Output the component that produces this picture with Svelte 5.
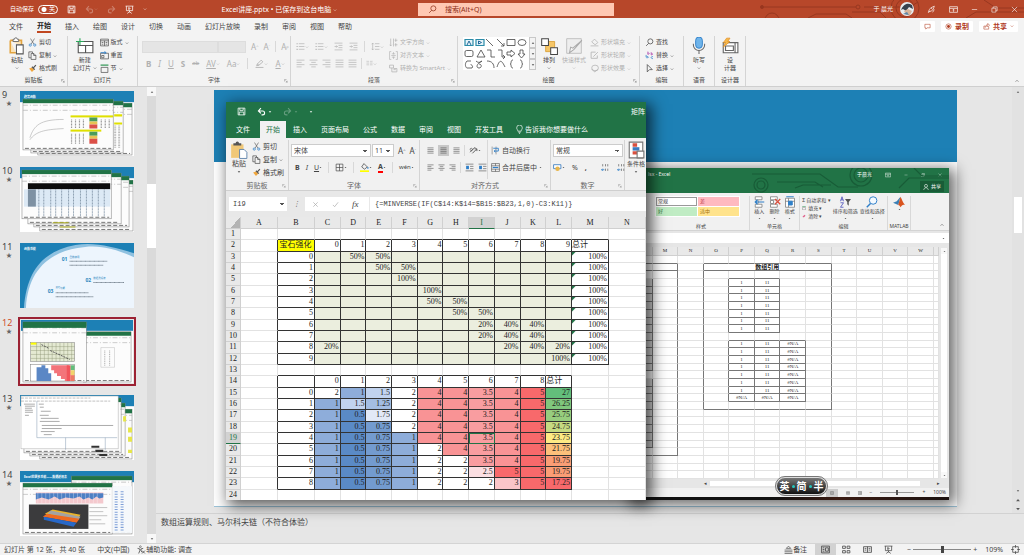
<script>
	const tabs = ['文件', '开始', '插入', '绘图', '设计', '切换', '动画', '幻灯片放映', '录制', '审阅', '视图', '帮助'];
	const xlTabs = ['文件', '开始', '插入', '页面布局', '公式', '数据', '审阅', '视图', '开发工具'];

	const line = 'fill="none" stroke="currentColor"';
	const icons = {
		save: `<path d="M2 2h12v12H2zM5 2v4h6V2M4 14v-5h8v5" ${line} stroke-width="1.4"/>`,
		undo: `<path d="M3 7h7a3 3 0 0 1 0 7H8M7 2L2.500 7 7 11.500" ${line} stroke-width="2"/>`,
		redo: `<path d="M13 7H6a3 3 0 0 0 0 7h2M9 2l4.500 5L9 11.500" ${line} stroke-width="2"/>`,
		present: `<path d="M1 2h14M2.500 2v8h11V2M8 10v3M4 15l4-3 4 3M6.500 4.500v3.500l3-1.700z" ${line} stroke-width="1.300"/>`,
		search: `<circle cx="9.500" cy="6" r="4.500" ${line} stroke-width="1.300"/><path d="M6.500 9.500L2 14" ${line} stroke-width="1.300"/>`,
		pen: `<path d="M3 12c0-3 2-5 4-7l6-3-2 6c-2 2-5 4-8 4zM7 5l3 3M2 14l3-4M13 8l-3 5" ${line} stroke-width="1.200"/>`,
		ribbonBox: `<path d="M1 3h14v10H1zM1 6h14M8 12V8M6 9.500L8 7.500l2 2" ${line} stroke-width="1.200"/>`,
		min: `<path d="M2 8h12" ${line} stroke-width="1.300"/>`,
		restore: `<path d="M2 5h9v9H2zM5 5V2h9v9h-3" ${line} stroke-width="1.300"/>`,
		close: `<path d="M2 2l12 12M14 2L2 14" ${line} stroke-width="1.300"/>`,
		comment: `<path d="M2 3h12v8H7l-3 3v-3H2z" ${line} stroke-width="1.200"/>`,
		record: `<circle cx="8" cy="8" r="6" ${line} stroke-width="1.300"/><circle cx="8" cy="8" r="3.300" fill="currentColor"/>`,
		share: `<path d="M5 7H2v7h11V9M5 10c0-4 3-6 6-6V1l4 4-4 4V6.500C8 6.500 6.500 8 5 10z" ${line} stroke-width="1.200"/>`,
		down: `<path d="M3 6l5 5 5-5" ${line} stroke-width="1.800"/>`,
		up: `<path d="M2 11l6-6 6 6" ${line} stroke-width="2"/>`,
		tri: `<path d="M3 5h10l-5 6z" fill="currentColor"/>`,
		triUp: `<path d="M3 11h10L8 5z" fill="currentColor"/>`,
		launch: `<path d="M2 10V2h8M6 6l7 7M13 7v6H7" ${line} stroke-width="1.300"/>`,
		paste: `<path d="M2 3h10v5M2 3v11h5" fill="#fbe3b8" stroke="#e3a440" stroke-width="1.400"/><path d="M4.500 4V2h1.200a1.300 1.300 0 0 1 2.600 0h1.200v2z" fill="#fff" stroke="#666" stroke-width=".8"/><path d="M7.500 7h6v8h-6z" fill="#fff" stroke="#555" stroke-width=".9"/>`,
		xlpaste: `<path d="M1 3h11v12H1z" fill="#f0c878"/><path d="M3 4V2h2a1.500 1.500 0 0 1 3 0h2v2z" fill="#555"/><path d="M8.500 7.500h4l2.500 2.500v5.500H8.500z" fill="#fff" stroke="#5a7fa8" stroke-width=".8"/>`,
		cut: `<path d="M4.500 1l6 10M11.500 1l-6 10" stroke="#555" stroke-width="1.100"/><circle cx="4" cy="12.500" r="2" fill="none" stroke="#2f7fc8" stroke-width="1.300"/><circle cx="12" cy="12.500" r="2" fill="none" stroke="#2f7fc8" stroke-width="1.300"/>`,
		copy: `<path d="M1.500 12V1.500H8V4M1.500 12H5" ${line} stroke-width="1.200"/><path d="M5.500 4.500h5L14 8v7H5.500zM10 4.500V8h4" ${line} stroke-width="1.200"/>`,
		brush: `<path d="M2 8l5 6 4-4-4-4z" fill="#f0a63c"/><path d="M7 5l5 5M9.500 7L14 2" stroke="#555" stroke-width="2.200"/>`,
		newSlide: `<path d="M2 4h13v10H2zM2 7.500h13M8.500 7.500V14" fill="#fff" stroke="#555" stroke-width="1"/><path d="M0 4h7M3.500 1v6" stroke="#2ba85b" stroke-width="1"/>`,
		layout: `<path d="M1 2h14v12H1zM1 5h14M8 5v9M3 8h3M3 11h3M10 8h3M10 11h3" ${line} stroke-width="1.200"/>`,
		reset: `<path d="M1 4h14v10H1zM3 8h4v4H3z" ${line} stroke-width="1.200"/><path d="M1 3h9M8 1l3 2-3 2" fill="none" stroke="#2f7fc8" stroke-width="1.600"/>`,
		sect: `<path d="M2 6h12v9H2z" ${line} stroke-width="1.200"/><path d="M1 2h14" stroke="#4ba36b" stroke-width="2.500"/>`,
		bullets: `<path d="M5 3h10M5 8h10M5 13h10" ${line} stroke-width="1.200"/><path d="M1 3h2M1 8h2M1 13h2" ${line} stroke-width="2"/>`,
		indent: `<path d="M1 2h14M8 6h7M8 10h7M1 14h14M1 8h5M4 6l2 2-2 2" ${line} stroke-width="1.200"/>`,
		spacing: `<path d="M7 3h8M7 8h8M7 13h8M3 2v12M1 4l2-2 2 2M1 12l2 2 2-2" ${line} stroke-width="1.200"/>`,
		left: `<path d="M1 2h14M1 6h9M1 10h14M1 14h9" ${line} stroke-width="1.200"/>`,
		center: `<path d="M1 2h14M4 6h8M1 10h14M4 14h8" ${line} stroke-width="1.200"/>`,
		right: `<path d="M1 2h14M6 6h9M1 10h14M6 14h9" ${line} stroke-width="1.200"/>`,
		justify: `<path d="M1 2h14M1 6h14M1 10h14M1 14h14" ${line} stroke-width="1.200"/>`,
		cols: `<path d="M1 3h6M9 3h6M1 7h6M9 7h6M1 11h6M9 11h6" ${line} stroke-width="1.200"/>`,
		textdir: `<path d="M3 1v13M1 12l2 2 2-2M8 1v14M12 1v6M10 4h5M12 9v6M10 12h5" ${line} stroke-width="1.200"/>`,
		textalign: `<path d="M4 1H1v14h3M12 1h3v14h-3M4 8h8M8 2v4M8 10v4M5 5h6M5 11h6" ${line} stroke-width="1.100"/>`,
		smart: `<path d="M1 2h7v5H1zM5 7v7h9V8H8M8 10h4" ${line} stroke-width="1.300"/>`,
		marker: `<path d="M4 9l7-7 3 3-7 6zM4 9l-1 3 4-1M1 15h14" ${line} stroke-width="1.500"/>`,
		arrange: `<path d="M5 4h8v9H5z" fill="#f6c667" stroke="#d89a2c" stroke-width=".7"/><path d="M1.500 1.500h6v6h-6zM9.500 9.500h6v6h-6z" fill="#fff" stroke="#444" stroke-width=".9"/>`,
		style: `<path d="M1.500 1.500h13v13h-13z" fill="#eee" stroke="#bbb" stroke-width=".8"/><path d="M15 3L8 11l-4 3 1-5 2 1z" fill="#f8f8f8" stroke="#aaa" stroke-width=".9"/>`,
		fill: `<path d="M8 2l6 6-5 4-6-5zM1 14h14" ${line} stroke-width="1.300"/>`,
		outline: `<path d="M10 2H2v11h11V8M6 10l8-8" ${line} stroke-width="1.400"/>`,
		effect: `<ellipse cx="9" cy="7" rx="6" ry="5" ${line} stroke-width="1.300"/><path d="M3 9l5 5 6-4" ${line} stroke-width="1.500"/>`,
		replace: `<path d="M2 7v4h3M4 9l2 2-2 2" fill="none" stroke="#2f7fc8" stroke-width="1.400"/><path d="M5 1v5M5 4c3-2 4 2 0 2M11 2v5M11 5c3-2 4 2 0 2" fill="none" stroke="#b350b0" stroke-width="1.400"/><path d="M14 10c-4-1-4 4 0 3.500" fill="none" stroke="#2f7fc8" stroke-width="1.400"/>`,
		pointer: `<path d="M4 1l9 9H8l-4 4z" ${line} stroke-width="1.300"/>`,
		mic: `<rect x="5" y="0" width="6" height="10" rx="3" fill="#6fb4ea" stroke="#2f7fc8" stroke-width=".8"/><path d="M3 6v1a5 5 0 0 0 10 0V6M8 12v3" fill="none" stroke="#666" stroke-width=".9"/>`,
		designer: `<path d="M2 5h13v9H2zM4 8h7v4H4zM12.500 5v9" fill="#fff" stroke="#666" stroke-width="1"/><path d="M5 1h3L6 4h2L2 9l2-4H2z" fill="#f6b84a" stroke="#e08a1e" stroke-width=".6"/>`,
		access: `<circle cx="6" cy="3" r="1.600" ${line}/><path d="M1 6l4 1v3l-2 5M11 6L7 7v3l2 3M9 10l5 5M14 10l-5 5" ${line} stroke-width="1.400"/>`,
		notes: `<path d="M1 9h14M1 12h14M1 15h14M4 6l4-4 4 4z" ${line} stroke-width="1.200"/>`,
		normal: `<path d="M1 2h14v12H1zM3 5h3M3 8h3M3 11h3M8 5h5v6H8z" ${line} stroke-width="1.400"/>`,
		sorter: `<path d="M1 2h5v4H1zM9 2h5v4H9zM1 10h5v4H1zM9 10h5v4H9z" ${line} stroke-width="1.400"/>`,
		reading: `<path d="M1 3h14v10H1zM8 3v10M3 6h3M3 9h3M10 6h3M10 9h3" ${line} stroke-width="1.400"/>`,
		fit: `<path d="M3 3h10v10H3zM8 0v5M8 11v5M0 8h5M11 8h5" ${line} stroke-width="1.300"/>`,
		borders: `<path d="M2 2h12v12H2zM8 2v12M2 8h12" ${line} stroke-width="1.200"/>`,
		bucket: `<path d="M7 1l6 6-5 4-5-4z" ${line} stroke-width="1.300"/><path d="M14 7v3" stroke="#2f7fc8" stroke-width="2"/><path d="M0 14.500h16" stroke="#ff0" stroke-width="3"/>`,
		orient: `<path d="M2 11L11 2M6 13l7-7M10 5h4v4" ${line} stroke-width="1.500"/><circle cx="4" cy="6" r="2" ${line}/>`,
		wrap: `<path d="M2 1v14M9 1v14" stroke="#666"/><path d="M4 4h9v5H6M8 7L5.500 9 8 11" fill="none" stroke="#2f7fc8" stroke-width="1.600"/>`,
		merge: `<path d="M1 1h14v14H1zM1 5h14M1 11h14M8 1v4M8 11v4" ${line}/><path d="M3 8h10" stroke="#2f7fc8" stroke-width="2"/>`,
		xlindent: `<path d="M1 2h14M9 6h6M9 10h6M1 14h14" ${line}/><path d="M2 5h5v6H2z" fill="#2f7fc8"/>`,
		money: `<path d="M1 3h13v7H1z" fill="#fff" stroke="#3a7cc0" stroke-width="1.500"/><circle cx="8" cy="10" r="4" fill="#e8b64c"/>`,
		dec: `<path d="M3 2v4M8 2v4M12 2v4M8 10v4M12 10v4" stroke="#777" stroke-width="1.500"/><path d="M1 12h5M3 10l-2 2 2 2" fill="none" stroke="#2f7fc8" stroke-width="1.500"/>`,
		cond: `<path d="M2 1h12v14H2z" fill="#fff" stroke="#777"/><path d="M5 2h4v3H5zM5 9h7v3H5z" fill="#d9503f"/><path d="M5 5.500h6v3H5z" fill="#3a7cc0"/><path d="M9 9h6v6H9z" fill="#fff" stroke="#777"/>`,
		bulb: `<path d="M5 11c0-3-2-3-2-6a5 5 0 0 1 10 0c0 3-2 3-2 6zM6 13h4M7 15h2" ${line} stroke-width="1.200"/>`,
		xcross: `<path d="M3 3l10 10M13 3L3 13" ${line} stroke-width="1.600"/>`,
		check: `<path d="M2 9l4 4 8-10" ${line} stroke-width="1.600"/>`,
		ins: `<path d="M3 1h9v4H3zM3 11h9v4H3zM7 6v4" fill="#fff" stroke="#777"/><path d="M15 8H3M6 5L3 8l3 3" fill="none" stroke="#2f7fc8" stroke-width="1.600"/>`,
		del: `<path d="M2 1h9v4H2zM2 11h9v4H2zM2 6h4v4H2z" fill="#fff" stroke="#777"/><path d="M8 4l7 7M15 4l-7 7" stroke="#d9503f" stroke-width="1.700"/>`,
		fmt: `<path d="M2 3h12v12H2zM2 7h12M6 3v12" fill="#fff" stroke="#777"/><path d="M6 7h5v5H6zM3 1h10" fill="#2f7fc8" stroke="#2f7fc8" stroke-width="1.300"/>`,
		sort: `<path d="M2 7l2-6 2 6M2.600 5h3M2 9h4l-4 6h4" fill="none" stroke="#5b5fc0" stroke-width="1.200"/><path d="M8 4h8l-3 4v5l-2-2V8z" fill="#555"/>`,
		find: `<circle cx="9.500" cy="6" r="5" fill="#f4faff" stroke="#2f7fc8" stroke-width="1.300"/><path d="M6 10l-5 5" stroke="#2f7fc8" stroke-width="2"/>`,
		matlab: `<path d="M0 9l5-2 5-6-3 11z" fill="#3b7fb5"/><path d="M10 1c2 3 3 8 6 11-3-1-4 0-6 3-1-2-2-3-3-3z" fill="#d9541e"/>`,
		eraser: `<path d="M2 11l8-8 4 4-6 6H4z" fill="#e0608a"/>`,
		person: `<circle cx="8" cy="5" r="4" ${line} stroke-width="1.500"/><path d="M2 16c0-8 12-8 12 0" ${line} stroke-width="1.500"/>`
	};

	// front sheet
	const letters = 'ABCDEFGHIJKLMN'.split('');
	const chance = [
		['', 50, 50],
		['', '', 50, 50],
		['', '', '', 100],
		['', '', '', '', 100],
		['', '', '', '', 50, 50],
		['', '', '', '', '', 50, 50],
		['', '', '', '', '', '', 20, 40, 40],
		['', '', '', '', '', '', 20, 40, 40],
		[20, '', '', '', '', '', '', 20, 40, 20],
		['', '', '', '', '', '', '', '', '', 100]
	];
	const inverse = [
		[2, 1, 1.5, 2, 4, 4, 3.5, 4, 5, 27],
		[1, 1.5, 1.25, 2, 4, 4, 3.5, 4, 5, 26.25],
		[1, 0.5, 1.75, 2, 4, 4, 3.5, 4, 5, 25.75],
		[1, 0.5, 0.75, 2, 4, 4, 3.5, 4, 5, 24.75],
		[1, 0.5, 0.75, 1, 4, 4, 3.5, 4, 5, 23.75],
		[1, 0.5, 0.75, 1, 2, 4, 3.5, 4, 5, 21.75],
		[1, 0.5, 0.75, 1, 2, 2, 3.5, 4, 5, 19.75],
		[1, 0.5, 0.75, 1, 2, 2, 2.5, 5, 5, 19.75],
		[1, 0.5, 0.75, 1, 2, 2, 2, 3, 5, 17.25]
	];
	const heat = {
		0.5: '#5a8ac6', 0.75: '#739bcf', 1: '#8eadda', 1.25: '#a4bee3', 1.5: '#c1d3ef', 1.75: '#e2e9f6',
		2: '#ffffff', 2.5: '#fbdfe2', 3: '#fac5c8', 3.5: '#f99da0', 4: '#f99395', 5: '#f8696b',
		27: '#63be7b', 26.25: '#80c77d', 25.75: '#97cd7e', 24.75: '#c6da81', 23.75: '#fdea84', 21.75: '#fcc07b',
		19.75: '#fa9d75', 17.25: '#f8696b'
	};

	function cell(r, c) {
		if (r >= 2 && r <= 12 && c >= 1 && c <= 12) {
			if (r === 2) {
				if (c === 1) return { t: '宝石强化', k: 'box gem' };
				if (c === 12) return { t: '总计', k: 'box txt' };
				return { t: c - 2, k: 'box' };
			}
			if (c === 1) return { t: r - 3, k: 'box' };
			if (c === 12) return { t: '100%', k: 'box flag' };
			const v = chance[r - 3][c - 2];
			return { t: v ? v + '%' : '', k: 'box olive' };
		}
		if (r >= 14 && r <= 23 && c >= 1 && c <= 11) {
			if (r === 14) return c === 11 ? { t: '总计', k: 'box txt' } : { t: c === 1 ? '' : c - 2, k: 'box' };
			if (c === 1) return { t: r - 15, k: 'box' };
			const v = inverse[r - 15][c - 2];
			return { t: v, k: r === 19 && c === 8 ? 'box picked' : 'box', bg: heat[v] };
		}
		const above = (r === 1 && c >= 1 && c <= 12) || (r === 13 && c >= 1 && c <= 11);
		const before = c === 0 && ((r >= 2 && r <= 12) || (r >= 14 && r <= 23));
		return { t: '', k: above ? 'inkb' : before ? 'inkr' : '' };
	}

	// sheet behind, columns L to W
	const backLetters = 'LMNOPQRSTUVW'.split('');
	function backCell(r, c) {
		const k = [];
		let t = '';
		const upper = r >= 4 && r <= 10;
		const lower = r >= 12 && r <= 19;
		if (upper && (c === 4 || c === 5)) t = c === 4 ? '1' : '11';
		if (lower && c >= 4 && c <= 6) t = r === 19 || c === 6 ? '#N/A' : c === 4 ? '1' : '11';
		if (t) k.push('inkb', 'inkr');
		if ((r === 3 || r === 11) && (c === 4 || c === 5 || (c === 6 && r === 11))) k.push('inkb');
		if (c === 3 && (upper || lower)) k.push('inkr');
		if (c === 2 && r >= 2 && r <= 20) k.push('inkr');
		if (c === 7 && r >= 2 && r <= 20) k.push('inkr');
		if (c >= 3 && c <= 7 && (r === 1 || r === 20)) k.push('inkb');
		if (c <= 1 && (r === 1 || r === 2 || r === 26)) k.push('inkb');
		if (c === 1 && r >= 2 && r <= 26) k.push('inkr');
		if (c === 0 && ((r >= 4 && r <= 15) || (r >= 17 && r <= 25))) k.push('inkb', 'inkr', 'shade');
		return { t, k: k.join(' ') };
	}
	const range = (n) => Array.from({ length: n }, (_, i) => i);

	let autosave = false;
	let zoom = 50;
	let formula = '{=MINVERSE(IF(C$14:K$14=$B15:$B23,1,0)-C3:K11)}';
	let notes = '数组运算规则、马尔科夫链（不符合体验）';
	let current = 12;
</script>

{#snippet ic(name, size = 's')}
	<svg class="ic {size}" viewBox="0 0 16 16" aria-hidden="true">{@html icons[name]}</svg>
{/snippet}

{#snippet small(name, text, more = false)}
	<button class="small">
		{@render ic(name)}<span>{text}</span>
		{#if more}{@render ic('down', 'xs')}{/if}
	</button>
{/snippet}

{#snippet foot(text, launcher = true)}
	<footer>
		<span>{text}</span>
		{#if launcher}<button class="launch" aria-label="{text}设置">{@render ic('launch', 'xs')}</button>{/if}
	</footer>
{/snippet}

{#snippet miniWindow(x, y, w, h)}
	<rect {x} {y} width={w} height={h} fill="#fcfcfc" stroke="#777" stroke-width=".5" />
	<rect {x} {y} width={w} height="4" fill="#217346" />
	<path d="M{x} {y + 6}h{w}M{x} {y + 11}h{w}" stroke="#aaa" stroke-width=".6" stroke-dasharray="5 2 1 2" />
	<path d="M{x + 2} {y + h - 1.5}h{w - 4}" stroke="#555" stroke-width=".8" stroke-dasharray="4 2" />
{/snippet}

{#snippet thumb(n)}
	<svg viewBox="0 0 115 64" preserveAspectRatio="none" aria-hidden="true">
		<rect width="115" height="64" fill="#fff" />
		{#if n !== 11}<rect width="115" height="11" fill="#1d80b5" />{/if}
		{#if n === 9}
			<text x="4" y="7" font-size="3" fill="#fff" font-weight="700">趋势函数</text>
			{@render miniWindow(18, 12, 95, 51)}
			{@render miniWindow(11, 10, 93, 51)}
			{@render miniWindow(3, 8, 91, 50)}
			<rect x="51" y="24" width="43" height="2" fill="#dfe000" />
			<rect x="51" y="38" width="31" height="2" fill="#dfe000" />
			<path d="M10 46c4-12 10-18 34-18M10 48c6-8 14-10 34-11" fill="none" stroke="#999" stroke-width=".5" />
			<path d="M52 28v9M56 28v9M60 28v9M64 28v9M82 28v9M86 28v9M90 28v9M52 42v10M56 42v10M60 42v10M64 42v10" stroke="#999" stroke-width="1.200" stroke-dasharray="1 .5" />
			<path d="M70 26h8v4h-8zM70 40h8v4h-8z" fill="#4a9c5c" />
			<path d="M70 30h8v3h-8zM70 44h8v3h-8z" fill="#e8c352" />
			<path d="M70 33h8v4h-8zM70 47h8v5h-8z" fill="#db5048" />
			<path d="M95 24h8M95 32h8" stroke="#dfe000" stroke-width="2" />
			<path d="M96 34v22M100 34v22" stroke="#bbb" stroke-width="2" stroke-dasharray="1 .6" />
		{:else if n === 10}
			{@render miniWindow(20, 13, 94, 50)}
			{@render miniWindow(14, 9, 96, 50)}
			{@render miniWindow(8, 6, 94, 50)}
			{@render miniWindow(2, 3, 90, 48)}
			<rect x="8" y="16" width="83" height="6" fill="#0d0d0d" />
			<rect x="4" y="22" width="87" height="17" fill="#dce9f5" />
			<rect x="8" y="22" width="8" height="17" fill="#7e91a3" />
			<path d="M19 22v27M24 22v27M31 22v27M36 22v27M42 22v27M49 22v27M54 22v27M61 22v27M67 22v27M73 22v27M79 22v27M85 22v27" stroke="#7f92a5" stroke-width=".9" stroke-dasharray="1 .5" />
			<path d="M33 55h16M40 59h16" stroke="#b0b021" />
		{:else if n === 11}
			<rect width="115" height="64" fill="#1d80b5" />
			<path d="M4 64c3-38 20-56 52-62 20-3 37 2 59 8v54z" fill="#8fc1e0" />
			<path d="M6 64c2-36 22-54 52-59 20-4 36 0 57 9v50z" fill="#edf5fd" />
			<text x="4" y="7" font-size="3" fill="#fff" font-weight="700">函数功能</text>
			<g fill="#2b87bd" font-size="5" font-weight="700">
				<text x="42" y="18">01</text><text x="66" y="38">02</text><text x="28" y="49">03</text>
			</g>
			<g fill="#2b87bd" font-size="2.500"><text x="50" y="15">函数使用</text><text x="74" y="35">数据透视表</text><text x="36" y="45">PPT功能</text></g>
			<path d="M50 18h38M50 22h34M74 39h31M36 49h33M36 53h38" stroke="#7c8995" stroke-width="1" stroke-dasharray="1 .3" />
		{:else if n === 12}
			{@render miniWindow(64, 12, 49, 51)}
			<path d="M82 28h14v20H82z" fill="none" stroke="#aaa" stroke-width=".4" />
			<path d="M86 31v16M91 31v16" stroke="#aaa" stroke-dasharray="1 .8" />
			{@render miniWindow(2, 2, 65, 61)}
			<rect x="2" y="2" width="65" height="6" fill="#217346" />
			<rect x="10" y="23" width="45" height="19" fill="#e4e9d2" stroke="#777" stroke-width=".5" />
			<rect x="10" y="23" width="6" height="2" fill="#ff0" />
			<path d="M16 23v19M20 23v19M24 23v19M28 23v19M32 23v19M36 23v19M40 23v19M44 23v19M48 23v19M52 23v19M10 27h45M10 31h45M10 35h45M10 39h45" stroke="#899170" stroke-width=".4" />
			<path d="M21 25l8 4M30 31l20 9" stroke="#555" stroke-dasharray="2 1" />
			<rect x="10" y="45" width="45" height="17" fill="#fff" stroke="#777" stroke-width=".5" />
			<path d="M16 48h5v-2h4v3h3v5h3v8H16z" fill="#5b87c5" />
			<path d="M31 46h18v16h-4v-2h-4v-3h-4v-3h-3v-3h-3z" fill="#f3747a" />
			<rect x="47" y="46" width="4" height="16" fill="#f1545b" />
			<path d="M51 46h4v5h-4z" fill="#63be7b" /><path d="M51 51h4v5h-4z" fill="#f2d36b" /><path d="M51 56h4v6h-4z" fill="#ef7862" />
		{:else if n === 13}
			{@render miniWindow(20, 14, 93, 49)}
			{@render miniWindow(10, 8, 96, 52)}
			{@render miniWindow(4, 3, 98, 54)}
			<rect x="1" y="1" width="98" height="52" fill="#fff" stroke="#aaa" stroke-width=".5" />
			<path d="M1 3h70M1 6h90" stroke="#999" stroke-width=".6" stroke-dasharray="3 1" />
			<path d="M17 6v36h81M46 42v12M86 42v12" stroke="#8298b0" stroke-width=".5" fill="none" />
			<path d="M4 9h11M5 11h10M5 13h7M5 15h8M5 17h8M5 20h4M19 9h5M20 12h4M21 16h10M20 20h9M21 23h18M20 26h20M22 30h72M22 33h20M21 36h14M24 39h8" stroke="#888" stroke-width=".7" />
			<path d="M72 51h8M76 55h8M80 59h8" stroke="#333" stroke-width="2" />
			<path d="M104 21h3v5h-3zM109 32h4v5h-4zM109 41h4v5h-4zM109 54h4v3h-4z" fill="#e6e64a" />
		{:else}
			<text x="4" y="7" font-size="3" fill="#fff" font-weight="700">Excel的更多功能——数据透视表</text>
			{@render miniWindow(52, 5, 61, 57)}
			{@render miniWindow(3, 12, 90, 50)}
			<rect x="93" y="15" width="20" height="46" fill="#f5f8fb" />
			<path d="M97 20v40M103 20v40" stroke="#7f9fd8" stroke-width="3" stroke-dasharray="1 1.500" />
			<rect x="16" y="21" width="68" height="11" fill="#f4c9ce" />
			<path d="M16 22h68v4l-4 1-3-2-4 3-4-2-5 2-4-3-6 2-8-1-6 2-5-3-6 3-7-2-6 2z" fill="#4d7fc4" />
			<path d="M18 21v11M22 21v11M26 21v11M30 21v11M34 21v11M38 21v11M42 21v11M46 21v11M50 21v11M54 21v11M58 21v11M62 21v11M66 21v11M70 21v11M74 21v11M78 21v11" stroke="#fff" stroke-width=".3" />
			<rect x="9" y="33" width="60" height="24" fill="#3b3b3d" />
			<path d="M33 38l28 5-3 5-33-6z" fill="#e9b32d" /><path d="M31 39l30 6-2 3-31-6z" fill="#a3a3a3" />
			<path d="M27 42l33 5-3 4-34-6z" fill="#ee6b22" /><path d="M24 45l33 6-3 4-30-7z" fill="#2868c8" />
			<path d="M70 36h18M70 40h14M70 44h18M70 48h12M70 52h16" stroke="#aaa" stroke-width=".7" />
		{/if}
	</svg>
{/snippet}

<div class="app">
	<header class="titlebar">
		<svg class="circuit" viewBox="0 0 264 18" aria-hidden="true">
			<g fill="none" stroke="#983820" stroke-width="1">
				<path d="M4 7h92M104 7h36M48 18l8-4h30l6 4M92 12h28l6 6M150 7l8-5M206 18l10-6h48M224 0l12 8h28" />
				<circle cx="2" cy="7" r="1.500" fill="#983820" /><circle cx="98" cy="7" r="2" /><circle cx="12" cy="20" r="7" />
				<circle cx="145" cy="8" r="14" /><circle cx="145" cy="8" r="9" />
			</g>
		</svg>
		<div class="quick">
			<label class="auto"><span>自动保存</span><input type="checkbox" bind:checked={autosave} /><i>关</i></label>
			<button aria-label="保存">{@render ic('save')}</button>
			<button class="dim" aria-label="撤消">{@render ic('undo', 's')}{@render ic('down', 'xs')}</button>
			<button class="dim" aria-label="重做">{@render ic('redo')}</button>
			<button aria-label="从头开始">{@render ic('present')}</button>
			<button aria-label="自定义">{@render ic('down', 'xs')}</button>
			<span class="doc">Excel讲座.pptx • 已保存到这台电脑 {@render ic('down', 'xs')}</span>
		</div>
		<label class="find">{@render ic('search')}<input type="text" aria-label="搜索" placeholder="搜索(Alt+Q)" /></label>
		<div class="winbtns">
			<span>于 晨光</span>
			<svg class="avatar" viewBox="0 0 14 14" aria-hidden="true">
				<circle cx="7" cy="7" r="7" fill="#e9edf0" /><path d="M1 8c2-5 6-8 11-5l1 4-4-2-3 4-3-2z" fill="#38424e" /><path d="M4 9l4-2 4 2-2 4H6z" fill="#d8b59b" /><path d="M3 12l4-2 2 3z" fill="#5e87a8" />
			</svg>
			<button aria-label="墨迹">{@render ic('pen')}</button>
			<button aria-label="功能区显示选项">{@render ic('ribbonBox', 's')}</button>
			<button aria-label="最小化">{@render ic('min', 'm7')}</button>
			<button aria-label="还原">{@render ic('restore', 'm7')}</button>
			<button aria-label="关闭">{@render ic('close', 'm7')}</button>
		</div>
	</header>

	<nav class="tabs">
		{#each tabs as tab}
			<button class:on={tab === '开始'}>{tab}</button>
		{/each}
		<span class="grow"></span>
		<button class="pill" aria-label="批注">{@render ic('comment', 'm7')}</button>
		<button class="pill">{@render ic('record', 'm7')}录制</button>
		<button class="pill">{@render ic('share', 'm7')}共享 {@render ic('down', 'xs')}</button>
	</nav>

	<div class="ribbon">
		<section class="g-clip">
			<div class="body">
				<button class="big">{@render ic('paste', 'xl')}<span>粘贴</span>{@render ic('down', 'xs')}</button>
				<div class="stack">{@render small('cut', '剪切')}{@render small('copy', '复制', true)}{@render small('brush', '格式刷')}</div>
			</div>
			{@render foot('剪贴板')}
		</section>
		<section class="g-slides">
			<div class="body">
				<button class="big">{@render ic('newSlide', 'xl')}<span>新建</span><span>幻灯片 {@render ic('down', 'xs')}</span></button>
				<div class="stack">{@render small('layout', '版式', true)}{@render small('reset', '重置')}{@render small('sect', '节', true)}</div>
			</div>
			{@render foot('幻灯片', false)}
		</section>
		<section class="g-font off">
			<div class="body col">
				<div class="line">
					<select class="face" aria-label="字体" disabled><option></option></select>
					<select class="pt" aria-label="字号" disabled><option></option></select>
					<button>A<sup>^</sup></button><button>A<sup>ˇ</sup></button><i class="vr"></i><button>A<sub>ρ</sub></button>
				</div>
				<div class="line fmt">
					<button><b>B</b></button><button><em>I</em></button><button><u>U</u></button><button><b>S</b></button>
					<button class="tiny"><s>ab</s></button><button><u>AV</u>{@render ic('down', 'xs')}</button><button>Aa{@render ic('down', 'xs')}</button>
					<i class="vr"></i>
					<button aria-label="荧光笔">{@render ic('marker')}{@render ic('down', 'xs')}</button><button><u>A</u>{@render ic('down', 'xs')}</button>
				</div>
			</div>
			{@render foot('字体')}
		</section>
		<section class="g-para off">
			<div class="body">
				<div class="col">
					<div class="line">
						{#each ['bullets', 'bullets', 'indent', 'indent', 'spacing'] as name, i}
							{#if i === 4}<i class="vr"></i>{/if}
							<button aria-label="段落 {i}">{@render ic(name)}{#if i < 2 || i > 3}{@render ic('down', 'xs')}{/if}</button>
						{/each}
					</div>
					<div class="line wide">
						{#each ['left', 'center', 'right', 'justify', 'justify'] as name}
							<button aria-label={name}>{@render ic(name)}</button>
						{/each}
						<i class="vr"></i><button aria-label="分栏">{@render ic('cols', 'm7')}{@render ic('down', 'xs')}</button>
					</div>
				</div>
				<div class="stack">{@render small('textdir', '文字方向', true)}{@render small('textalign', '对齐文本', true)}{@render small('smart', '转换为 SmartArt', true)}</div>
			</div>
			{@render foot('段落')}
		</section>
		<section class="g-draw">
			<div class="body">
				<div class="gallery">
					<svg class="shapes" viewBox="0 0 66 33" aria-hidden="true">
						<g fill="none" stroke="#444" stroke-width=".8">
							<path d="M23 2l7 7M34 2l7 7M41 6v3h-3M44 2.500h8v6h-8zM14 20l4-7 4 7zM24 13h4v7h4M35 13h4v7h3M40 18l2 2-2 2M44 15h4v-2l4 3.500-4 3.500v-2h-4zM57 13h3v4h2l-3.500 4-3.500-4h2z" />
							<rect x="2" y="13.500" width="8" height="6" rx="1.500" /><ellipse cx="59" cy="5.500" rx="4" ry="3" />
							<path d="M8 24H4c-3 3-1 7 0 7h5c2-3-2-3-1-4M13 24c3 3 6 0 6 0-6 3-6 7-3 7s3-4 0-4M24 24c5 0 7 3 7 7M34 30c3-9 5-6 8 0M50 23c-3 0-1 4-3 4 2 0 0 4 3 4M57 23c3 0 1 4 3 4-2 0 0 4-3 4" />
						</g>
						<path d="M2 2.500h8v6H2zM13 2.500h8v6h-8z" fill="#e6f3f8" stroke="#2a8ba8" stroke-width="1.200" />
						<path d="M4 8l2-4 2 4M15.500 4l3 1.500-3 1.500z" fill="none" stroke="#256a9c" />
					</svg>
					<div class="steps">
						<button aria-label="上一行">{@render ic('triUp', 'xs')}</button><button aria-label="下一行">{@render ic('tri', 'xs')}</button><button aria-label="更多形状">{@render ic('tri', 'xs')}</button>
					</div>
				</div>
				<button class="big">{@render ic('arrange', 'xl')}<span>排列</span>{@render ic('down', 'xs')}</button>
				<button class="big off">{@render ic('style', 'xl')}<span>快速样式</span>{@render ic('down', 'xs')}</button>
				<div class="stack off">{@render small('fill', '形状填充', true)}{@render small('outline', '形状轮廓', true)}{@render small('effect', '形状效果', true)}</div>
			</div>
			{@render foot('绘图')}
		</section>
		<section class="g-edit">
			<div class="body"><div class="stack">{@render small('search', '查找')}{@render small('replace', '替换', true)}{@render small('pointer', '选择', true)}</div></div>
			{@render foot('编辑', false)}
		</section>
		<section class="g-one">
			<div class="body"><button class="big">{@render ic('mic', 'xl')}<span>听写</span>{@render ic('down', 'xs')}</button></div>
			{@render foot('语音', false)}
		</section>
		<section class="g-one">
			<div class="body"><button class="big">{@render ic('designer', 'xl')}<span>设</span><span>计器</span></button></div>
			{@render foot('设计器', false)}
		</section>
		<button class="fold" aria-label="折叠功能区">{@render ic('up', 'xs')}</button>
	</div>

	<main>
		<aside>
			<ol>
				{#each [9, 10, 11, 12, 13, 14] as n}
					<li class:current={n === current}>
						<div class="num"><span>{n}</span><small>★</small></div>
						<button class="thumb" aria-label="幻灯片 {n}" on:click={() => (current = n)}>{@render thumb(n)}</button>
					</li>
				{/each}
			</ol>
			<div class="bar panes">
				<button aria-label="向上滚动">{@render ic('triUp', 'xs')}</button><i class="knob"></i><button class="end" aria-label="向下滚动">{@render ic('tri', 'xs')}</button>
			</div>
		</aside>

		<div class="stage">
			<div class="canvas">
				<div class="slide">
					<div class="band"></div>

					<div class="win back">
						<div class="xltitle">
							<svg class="circuit" viewBox="0 0 200 25" preserveAspectRatio="xMaxYMin meet" aria-hidden="true">
								<g fill="none" stroke="#185c37" stroke-width="1.200">
									<path d="M3 6h68l18 13h20M28 14h38l8 5M46 20l8-3h28M150 20l10-10h40M165 0l8 8h27" /><circle cx="12" cy="17" r="7" /><circle cx="12" cy="17" r="4" /><circle cx="112" cy="7" r="11" /><circle cx="112" cy="7" r="7" />
								</g>
							</svg>
							<span class="name">lsx - Excel</span>
							<span class="user">于晨光</span>
							{@render ic('ribbonBox', 'xm')}{@render ic('min', 'xs')}{@render ic('restore', 'xs')}{@render ic('close', 'xs')}
						</div>
						<div class="sharerow"><button>{@render ic('person', 'xm')} 共享</button></div>
						<div class="ribbon2">
							<section class="b-style">
								<div class="swatches"><span class="plain">常规</span><span class="bad">差</span><span class="good">好</span><span class="mid">适中</span></div>
								<footer>样式</footer>
							</section>
							<section class="b-cells">
								<div class="trio">
									{#each [['ins', '插入'], ['del', '删除'], ['fmt', '格式']] as [name, text]}
										<button class="big">{@render ic(name, 'm12')}<span>{text}</span>{@render ic('tri', 'xxs')}</button>
									{/each}
								</div>
								<footer>单元格</footer>
							</section>
							<section class="b-edit">
								<div class="trio">
									<div class="mini"><button>Σ 自动求和 ▾</button><button>{@render ic('sect', 'xs')} 填充 ▾</button><button>{@render ic('eraser', 'xs')} 清除 ▾</button></div>
									<button class="big">{@render ic('sort', 'm12')}<span>排序和筛选</span>{@render ic('tri', 'xxs')}</button>
									<button class="big">{@render ic('find', 'm12')}<span>查找和选择</span>{@render ic('tri', 'xxs')}</button>
								</div>
								<footer>编辑</footer>
							</section>
							<section class="b-matlab">
								<div class="trio"><button class="big" aria-label="MATLAB">{@render ic('matlab', 'm12')}{@render ic('tri', 'xxs')}</button></div>
								<footer>MATLAB</footer>
							</section>
							<button class="fold" aria-label="折叠">{@render ic('up', 'xs')}</button>
						</div>
						<div class="fxempty"><span>{@render ic('tri', 'xxs')}</span></div>
						<div class="sheetwrap">
							<table class="sheet">
								<colgroup>{#each backLetters as l}<col />{/each}<col class="sliver" /></colgroup>
								<thead><tr>{#each backLetters as l}<th>{l}</th>{/each}<th></th></tr></thead>
								<tbody>
									{#each range(29) as i}
										<tr>
											{#if i === 1}
												<td class="inkb"></td><td class="inkb inkr"></td><td class="inkr"></td>
												<td colspan="5" class="inkb inkr head">数组引用</td>
												<td></td><td></td><td></td><td></td><td></td>
											{:else}
												{#each backLetters as l, c}
													{@const d = backCell(i + 1, c)}
													<td class={d.k}>{d.t}</td>
												{/each}
												<td></td>
											{/if}
										</tr>
									{/each}
								</tbody>
							</table>
							<div class="bar inner"><button aria-label="上">{@render ic('triUp', 'xxs')}</button><i class="knob"></i><button aria-label="下">{@render ic('tri', 'xxs')}</button></div>
						</div>
						<div class="hscroll"><span>◂</span><i></i><span>▸</span></div>
						<div class="xlstatus">
							<span class="sel">{@render ic('borders', 'xs')}</span><span>{@render ic('reading', 'xs')}</span><span>{@render ic('normal', 'xs')}</span>
							<span>−</span><i></i><span>+</span><span>100%</span>
						</div>
						<div class="strip"></div>
						<div class="ime"><b>英</b><i></i><b>简</b><i></i><b>半</b></div>
					</div>

					<div class="win front">
						<div class="xltitle">
							{@render ic('save')}<span class="undo">{@render ic('undo')}{@render ic('tri', 'xs')}</span><span class="dimmed">{@render ic('redo')}{@render ic('tri', 'xs')}</span>{@render ic('tri', 'xs')}
							<span class="name">矩阵</span>
						</div>
						<nav class="xltabs">
							{#each xlTabs as tab}
								<button class:on={tab === '开始'}>{tab}</button>
							{/each}
							<button class="tell">{@render ic('bulb')} 告诉我你想要做什么</button>
						</nav>
						<div class="ribbon xl">
							<section class="x-clip">
								<div class="body">
									<button class="big">{@render ic('xlpaste', 'xl')}<span>粘贴</span>{@render ic('tri', 'xs')}</button>
									<div class="stack">{@render small('cut', '剪切')}{@render small('copy', '复制', true)}{@render small('brush', '格式刷')}</div>
								</div>
								{@render foot('剪贴板')}
							</section>
							<section class="x-font">
								<div class="body col">
									<div class="line">
										<select class="face" aria-label="单元格字体"><option>宋体</option></select>
										<select class="pt" aria-label="单元格字号"><option>11</option></select>
										<button class="grow-a">A<sup>^</sup></button><button class="grow-a">A<sup>ˇ</sup></button>
									</div>
									<div class="line fmt">
										<button><b>B</b></button><button><em>I</em></button><button><u>U</u> {@render ic('tri', 'xxs')}</button><i class="vr"></i>
										<button aria-label="边框">{@render ic('borders')}{@render ic('tri', 'xxs')}</button><i class="vr"></i>
										<button aria-label="填充颜色">{@render ic('bucket')}{@render ic('tri', 'xxs')}</button>
										<button><b class="redline">A</b>{@render ic('tri', 'xxs')}</button><i class="vr"></i><button class="tiny">wén{@render ic('tri', 'xxs')}</button>
									</div>
								</div>
								{@render foot('字体')}
							</section>
							<section class="x-align">
								<div class="body">
									<div class="col">
										<div class="line"><button aria-label="顶端">{@render ic('justify', 'm7')}</button><button class="pressed" aria-label="垂直居中">{@render ic('justify', 'm7')}</button><button aria-label="底端">{@render ic('justify', 'm7')}</button><i class="vr"></i><button aria-label="方向">{@render ic('orient')}{@render ic('tri', 'xxs')}</button></div>
										<div class="line"><button aria-label="左">{@render ic('left', 'm7')}</button><button aria-label="中">{@render ic('center', 'm7')}</button><button aria-label="右">{@render ic('right', 'm7')}</button><i class="vr"></i><button aria-label="减少缩进">{@render ic('xlindent')}</button><button aria-label="增加缩进">{@render ic('xlindent')}</button></div>
									</div>
									<div class="col sep">
										<div class="line"><button class="small">{@render ic('wrap')}<span>自动换行</span></button></div>
										<div class="line"><button class="small">{@render ic('merge')}<span>合并后居中</span>{@render ic('tri', 'xxs')}</button></div>
									</div>
								</div>
								{@render foot('对齐方式')}
							</section>
							<section class="x-num">
								<div class="body col">
									<div class="line"><select class="kind" aria-label="数字格式"><option>常规</option></select></div>
									<div class="line nums"><button aria-label="会计格式">{@render ic('money')}{@render ic('tri', 'xxs')}</button><button>%</button><button><b>,</b></button><i class="vr"></i><button aria-label="增加小数">{@render ic('dec')}</button><button aria-label="减少小数">{@render ic('dec')}</button></div>
								</div>
								{@render foot('数字')}
							</section>
							<section class="x-cond"><div class="body"><button class="big">{@render ic('cond', 'xl')}<span>条件格</span>{@render ic('tri', 'xs')}</button></div></section>
						</div>
						<div class="fx">
							<select aria-label="名称框"><option>I19</option></select>
							<i class="dots">⋮</i>
							<div class="fxb">{@render ic('xcross', 'm7')}{@render ic('check', 'm7')}<em>fx</em></div>
							<input type="text" aria-label="编辑栏" bind:value={formula} />
						</div>
						<table class="sheet">
							<colgroup><col class="rowno" /><col class="wide" /><col class="wide" />{#each range(10) as i}<col />{/each}<col class="wide" /><col class="wide" /></colgroup>
							<thead><tr><th class="corner"></th>{#each letters as l}<th class:hot={l === 'I'}>{l}</th>{/each}</tr></thead>
							<tbody>
								{#each range(24) as i}
									<tr>
										<th class:hot={i === 18}>{i + 1}</th>
										{#each letters as l, c}
											{@const d = cell(i + 1, c)}
											<td class={d.k} style:background={d.bg}>{d.t}</td>
										{/each}
									</tr>
								{/each}
							</tbody>
						</table>
					</div>
				</div>
				<div class="bar right">
					<button aria-label="上">{@render ic('triUp', 'xs')}</button><i class="knob"></i>
					<button class="end" aria-label="下">{@render ic('tri', 'xs')}</button><button aria-label="上一张">{@render ic('triUp', 'xm')}</button><button aria-label="下一张">{@render ic('tri', 'xm')}</button>
				</div>
			</div>
			<textarea class="notes" aria-label="备注" bind:value={notes}></textarea>
		</div>
	</main>

	<footer class="status">
		<span>幻灯片 第 12 张，共 40 张</span>
		<span>中文(中国)</span>
		<button>{@render ic('access')} 辅助功能: 调查</button>
		<span class="grow"></span>
		<button>{@render ic('notes')}备注</button>
		<div class="views">
			<button class="on" aria-label="普通视图">{@render ic('normal')}</button><button aria-label="幻灯片浏览">{@render ic('sorter')}</button>
			<button aria-label="阅读视图">{@render ic('reading')}</button><button aria-label="放映">{@render ic('present')}</button>
		</div>
		<button class="dimmed">−</button>
		<input type="range" aria-label="缩放" bind:value={zoom} />
		<button>+</button>
		<span class="pct">109%</span>
		<button aria-label="适应窗口">{@render ic('fit')}</button>
	</footer>
</div>

<style>
	:global(body) {
		background: #e6e6e6;
	}

	.app {
		display: flex;
		flex-direction: column;
		height: 100vh;
		min-height: 555px;
		overflow: hidden;
		font-family: 'Noto Sans', 'Noto Sans CJK SC', sans-serif;
		font-size: 7px;
		line-height: 9px;
		color: #444;
	}

	.app :global(*) {
		box-sizing: border-box;
	}

	button,
	select,
	input,
	textarea {
		margin: 0;
		padding: 0;
		border: 0;
		background: none;
		font: inherit;
		color: inherit;
		appearance: none;
		border-radius: 0;
		outline: none;
	}

	button {
		display: flex;
		align-items: center;
		justify-content: center;
		white-space: nowrap;
	}

	.ic {
		width: 9px;
		height: 9px;
		flex: none;
	}
	.ic.xxs { width: 3px; height: 3px; }
	.ic.xs { width: 4px; height: 4px; }
	.ic.xm { width: 6px; height: 6px; }
	.ic.m7 { width: 7px; height: 7px; }
	.ic.m12 { width: 12px; height: 12px; }
	.ic.xl { width: 18px; height: 18px; }

	.grow {
		flex: 1;
	}

	/* title bar */
	.titlebar {
		position: relative;
		flex: none;
		display: grid;
		grid-template-columns: 1fr 196px 1fr;
		align-items: center;
		height: 18px;
		padding-left: 8px;
		background: #b7472a;
		color: #fff;
		font-size: 6px;
	}

	.titlebar .circuit {
		position: absolute;
		right: 0;
		top: 0;
		width: 264px;
		height: 18px;
	}

	.quick {
		display: flex;
		align-items: center;
		gap: 9px;
		padding-left: 2px;
	}

	.dim {
		opacity: 0.3;
	}

	.auto {
		display: flex;
		align-items: center;
		gap: 4px;
		position: relative;
	}

	.auto input {
		width: 20px;
		height: 9px;
		border: 1px solid #fff;
		border-radius: 5px;
		background: radial-gradient(circle at 5px 50%, #fff 2px, transparent 3px);
	}

	.auto i {
		position: absolute;
		right: 3px;
		font-style: normal;
	}

	.doc {
		margin-left: auto;
		margin-right: 81px;
		font-size: 7px;
		white-space: nowrap;
	}

	.find {
		display: flex;
		align-items: center;
		gap: 8px;
		height: 13px;
		padding-left: 10px;
		background: #ffc8b3;
		color: #8c2c14;
		font-size: 7px;
	}

	.find input::placeholder {
		color: #8c2c14;
	}

	.winbtns {
		position: relative;
		display: flex;
		align-items: center;
		justify-content: flex-end;
		gap: 13px;
		padding-right: 6px;
	}

	.winbtns span {
		margin-right: -6px;
	}

	.avatar {
		width: 14px;
		height: 14px;
	}

	/* tabs */
	.tabs {
		flex: none;
		display: flex;
		align-items: center;
		gap: 14px;
		height: 16px;
		padding: 0 6px 0 9px;
		background: #f3f3f3;
	}

	.tabs .on {
		height: 13px;
		border-bottom: 2px solid #c0461f;
		font-weight: 700;
		color: #222;
	}

	.pill {
		height: 11px;
		padding: 0 4px;
		gap: 3px;
		background: #fff;
		border-radius: 1px;
		color: #b03a1c;
		font-weight: 700;
	}

	.tabs .pill + .pill {
		margin-left: -8px;
	}

	/* ribbons */
	.ribbon {
		position: relative;
		flex: none;
		display: flex;
		height: 53px;
		padding-top: 2px;
		border-bottom: 1px solid #cfcfcf;
		background: #f3f3f3;
		font-size: 6px;
		overflow: hidden;
	}

	.ribbon section {
		flex: none;
		display: flex;
		flex-direction: column;
		border-right: 1px solid #d4d4d4;
	}

	.body {
		display: flex;
		height: 39px;
	}

	.body.col,
	.col {
		display: flex;
		flex-direction: column;
		padding-top: 2px;
	}

	.ribbon footer {
		position: relative;
		height: 11px;
		line-height: 11px;
		text-align: center;
	}

	.launch {
		position: absolute;
		right: 2px;
		top: 4px;
	}

	.big {
		flex-direction: column;
		justify-content: flex-start;
		line-height: 8px;
	}

	.big .ic.xl {
		margin: 1px 0;
	}

	.big span + .ic {
		margin-top: 2px;
	}

	.stack {
		display: flex;
		flex-direction: column;
		align-items: flex-start;
	}

	.small {
		height: 13px;
		gap: 2px;
	}

	.line {
		display: flex;
		align-items: center;
		height: 17px;
		gap: 4px;
	}

	.vr {
		width: 1px;
		height: 11px;
		background: #d8d8d8;
	}

	.off {
		color: #b0b0b0;
	}

	.off footer {
		color: #555;
	}

	sup,
	sub {
		font-size: 4px;
		line-height: 4px;
	}

	.g-clip { width: 68px; }
	.g-clip .body { padding-left: 8px; gap: 2px; }
	.g-slides { width: 70px; }
	.g-slides .body { padding-left: 5px; gap: 3px; }
	.g-font { width: 153px; }
	.g-font .body { padding-left: 4px; font-size: 8px; }
	.g-font .line:first-child { gap: 5px; }
	.g-font .face { width: 76px; }
	.g-font .pt { width: 28px; margin-left: -5px; }
	.g-font .fmt { padding-left: 4px; gap: 7px; }
	.g-font select { height: 12px; background: #e0e0e0; border: 1px solid #d4d4d4; }
	.g-para { width: 167px; }
	.g-para .body { padding-left: 5px; gap: 5px; }
	.g-para .line { gap: 6px; }
	.g-para .wide { gap: 4px; }
	.g-draw { width: 182px; }
	.g-draw .body { padding-left: 5px; gap: 4px; }
	.g-edit { width: 44px; }
	.g-edit .body { padding-left: 5px; }
	.g-one { width: 31px; }
	.g-one .body { justify-content: center; }

	.tiny {
		font-size: 6px;
	}

	.gallery {
		display: flex;
		width: 73px;
		height: 33px;
		margin-top: 1px;
		background: #fff;
	}

	.shapes {
		width: 66px;
		height: 33px;
	}

	.steps {
		width: 7px;
	}

	.steps button {
		width: 7px;
		height: 11px;
		border: 1px solid #c8c8c8;
		background: #f3f3f3;
	}

	.fold {
		position: absolute;
		right: 5px;
		bottom: 3px;
	}

	/* slide list */
	main {
		flex: 1;
		display: flex;
		min-height: 0;
	}

	aside {
		flex: none;
		display: flex;
		width: 156px;
	}

	ol {
		flex: 1;
		margin: 0;
		padding: 2px 0 0;
		list-style: none;
		overflow: hidden;
	}

	li {
		display: flex;
		height: 76px;
	}

	.num {
		width: 18px;
		padding-left: 2px;
		font-size: 9px;
		line-height: 11px;
	}

	.num small {
		display: block;
		padding-left: 4px;
		font-size: 6px;
		line-height: 6px;
		color: #666;
	}

	.thumb {
		width: 118px;
		height: 69px;
		padding: 2px;
	}

	.thumb svg {
		width: 100%;
		height: 100%;
	}

	.current .thumb {
		border: 2px solid #9c2233;
		padding: 1px;
	}

	.current .num span {
		color: #d0502c;
	}

	.bar {
		flex: none;
		display: flex;
		flex-direction: column;
		width: 9px;
		background: #dadada;
	}

	.bar button {
		height: 9px;
		background: #f8f8f8;
		color: #555;
	}

	.bar .end {
		margin-top: auto;
	}

	.knob {
		background: #fff;
	}

	.panes .knob {
		height: 64px;
		margin-top: 88px;
	}

	/* stage */
	.stage {
		flex: 1;
		display: flex;
		flex-direction: column;
		min-width: 0;
	}

	.canvas {
		flex: 1;
		display: flex;
		min-height: 0;
		border-bottom: 1px solid #d2d2d2;
	}

	.slide {
		position: relative;
		flex: 1;
		margin: 3px 55px 6px 58px;
		background: #fff;
		border-bottom: 1px solid #9cc3d8;
	}

	.band {
		height: 72px;
		background: #1d80b5;
	}

	.bar.right {
		background: #e2e2e2;
		width: 12px;
		padding: 0 2px;
	}

	.right .knob {
		height: 36px;
		margin-top: 101px;
	}

	.right button {
		background: none;
	}

	.notes {
		flex: none;
		height: 29px;
		padding: 3px 5px;
		font-size: 8px;
		line-height: 10px;
		resize: none;
	}

	.win {
		position: absolute;
		display: flex;
		flex-direction: column;
		bottom: 6px;
		background: #f1f1f1;
	}

	.front {
		left: 12px;
		top: 12px;
		width: 420px;
		box-shadow: 4px 4px 14px 2px rgba(0, 0, 0, 0.65);
		overflow: hidden;
	}

	.back {
		right: 8px;
		top: 78px;
		width: 322px;
		box-shadow: 4px 3px 14px 2px rgba(0, 0, 0, 0.6);
		font-size: 5px;
		line-height: 7px;
	}

	.xltitle {
		position: relative;
		display: flex;
		align-items: center;
		gap: 11px;
		flex: none;
		height: 19px;
		padding-left: 11px;
		background: #217346;
		color: #fff;
	}

	.xltitle .undo,
	.xltitle .dimmed {
		display: flex;
		align-items: center;
		gap: 2px;
	}

	.xltitle .dimmed {
		opacity: 0.3;
	}

	.front .name {
		margin-left: auto;
		margin-right: 1px;
	}

	.xltabs {
		flex: none;
		display: flex;
		align-items: stretch;
		height: 17px;
		padding-left: 3px;
		background: #217346;
		color: #fff;
	}

	.xltabs button {
		padding: 0 7px;
	}

	.xltabs button:first-child {
		margin-right: 3px;
	}

	.xltabs .on {
		padding: 0 6px;
		background: #f1f1f1;
		color: #217346;
	}

	.xltabs .tell {
		gap: 1px;
		padding: 0 5px;
	}

	.ribbon.xl {
		height: 53px;
		background: #f1f1f1;
		font-size: 7px;
	}

	.ribbon.xl footer {
		margin-top: 1px;
		height: 10px;
		color: #666;
	}

	.xl .big {
		width: 22px;
	}

	.x-clip { width: 63px; }
	.x-clip .body { padding-left: 2px; gap: 2px; }
	.x-font { width: 131px; }
	.x-font .body { padding-left: 2px; }
	.x-font .face { width: 80px; }
	.x-font .pt { width: 22px; margin-left: -3px; }
	.x-font .fmt { padding-left: 4px; gap: 6px; }
	.x-align { width: 131px; }
	.x-align .body { padding-left: 7px; }
	.x-num { width: 74px; }
	.x-num .body { padding-left: 2px; }
	.x-num .nums { gap: 7px; }
	.x-cond { font-size: 6px; }

	.grow-a {
		font-size: 8px;
	}

	.xl select {
		height: 13px;
		padding-left: 2px;
		border: 1px solid #ccc;
		background: conic-gradient(from -45deg at 50% 100%, #555 90deg, transparent 0) right 3px center / 4px 2px no-repeat #fff;
	}

	.xl .kind {
		width: 70px;
	}

	.col.sep {
		margin-left: auto;
		width: 64px;
		padding-left: 3px;
		border-left: 1px solid #d8d8d8;
	}

	.pressed {
		padding: 2px;
		background: #c8c8c8;
	}

	.redline {
		border-bottom: 2px solid #f00;
		line-height: 8px;
	}

	.fx {
		flex: none;
		display: flex;
		align-items: center;
		height: 26px;
		padding-left: 3px;
		gap: 1px;
		background: #e8e8e8;
	}

	.fx > * {
		height: 14px;
		background: #fff;
	}

	.fx select {
		width: 58px;
		padding-left: 4px;
		font-family: 'Liberation Mono', monospace;
		background: conic-gradient(from -45deg at 50% 100%, #555 90deg, transparent 0) right 3px center / 4px 2px no-repeat #fff;
	}

	.fx .dots {
		width: 16px;
		background: none;
		text-align: center;
		line-height: 14px;
	}

	.fxb {
		display: flex;
		align-items: center;
		gap: 13px;
		width: 64px;
		padding-left: 7px;
		color: #aaa;
	}

	.fxb em {
		color: #444;
		font: italic 9px 'Liberation Serif', serif;
	}

	.fx input {
		flex: 1;
		padding-left: 5px;
		font-family: 'Liberation Mono', monospace;
	}

	/* sheets */
	.sheet {
		flex: 1;
		width: 100%;
		table-layout: fixed;
		border-spacing: 0;
		background: #fff;
		font-family: 'Liberation Serif', 'Noto Sans CJK SC', serif;
		font-size: 8px;
		line-height: 8px;
		color: #222;
	}

	.front .sheet {
		height: 284px;
		flex: none;
	}

	.sheet col.rowno { width: 15px; }
	.sheet col.wide { width: 37px; }
	.sheet col.sliver { width: 5px; }

	.sheet th {
		padding: 0;
		background: #e9e9e9;
		border-right: 1px solid #d0d0d0;
		border-bottom: 1px solid #d0d0d0;
		font-weight: 400;
	}

	.sheet thead th {
		height: 12px;
	}

	.sheet .hot {
		background: #d2d2d2;
		color: #217346;
		border-bottom-color: #217346;
	}

	.sheet .corner {
		background: linear-gradient(135deg, transparent 60%, #b4b4b4 60%) #e9e9e9;
	}

	.sheet td {
		padding: 0;
		border-right: 1px solid #e2e2e2;
		border-bottom: 1px solid #e2e2e2;
		text-align: right;
		white-space: nowrap;
		overflow: hidden;
	}

	.sheet td.box {
		padding-right: 1px;
		border-color: #333;
	}

	.sheet td.gem {
		background: #ff0;
		text-align: center;
	}

	.sheet td.txt {
		text-align: left;
	}

	.sheet td.olive {
		background: #ebeede;
	}

	.sheet td.flag {
		background: linear-gradient(135deg, #217346 2px, transparent 3px) #fff;
	}

	.sheet td.picked {
		outline: 1px solid #217346;
		outline-offset: -1px;
	}

	.sheet td.inkb {
		border-bottom-color: #333;
	}

	.sheet td.inkr {
		border-right-color: #333;
	}

	/* window behind */
	.back .xltitle {
		height: 13px;
		gap: 13px;
		padding: 0 7px 0 21px;
	}

	.back .circuit {
		position: absolute;
		right: 0;
		top: 0;
		width: 200px;
		height: 25px;
	}

	.back .name {
		margin-right: auto;
	}

	.back .user {
		position: relative;
	}

	.sharerow {
		flex: none;
		display: flex;
		justify-content: flex-end;
		height: 12px;
		padding-right: 5px;
		background: #217346;
		color: #fff;
	}

	.sharerow button {
		position: relative;
		height: 11px;
		padding: 0 3px;
		gap: 2px;
		background: #185c37;
	}

	.ribbon2 {
		position: relative;
		flex: none;
		display: flex;
		height: 38px;
		padding: 3px 0 0 26px;
		border-bottom: 1px solid #d4d4d4;
	}

	.ribbon2 section {
		display: flex;
		flex-direction: column;
		justify-content: space-between;
		border-right: 1px solid #d8d8d8;
	}

	.ribbon2 footer {
		text-align: center;
	}

	.ribbon2 .big {
		line-height: 7px;
	}

	.b-style { width: 97px; }
	.b-cells { width: 50px; }
	.b-edit { width: 88px; }
	.b-matlab { width: 23px; }

	.swatches {
		display: grid;
		grid-template-columns: 41px 41px;
		gap: 1px;
		margin-left: 2px;
		padding: 1px;
		width: 85px;
		background: #fff;
	}

	.swatches span {
		height: 9px;
		padding-left: 2px;
		line-height: 9px;
	}

	.plain { outline: 1px solid #999; outline-offset: -1px; }
	.bad { background: #ffb9c0; color: #c2434e; }
	.good { background: #c0ecc4; color: #2e7a3a; }
	.mid { background: #ffe38c; color: #a87412; }

	.trio {
		display: flex;
		justify-content: space-evenly;
	}

	.mini {
		display: flex;
		flex-direction: column;
		align-items: flex-start;
	}

	.mini button {
		height: 8px;
		gap: 2px;
	}

	.fxempty {
		flex: none;
		height: 16px;
		padding: 2px 0 4px;
		background: #e6e6e6;
	}

	.fxempty span {
		display: flex;
		justify-content: flex-end;
		align-items: center;
		height: 10px;
		padding-right: 4px;
		background: #fff;
	}

	.sheetwrap {
		flex: 1;
		display: flex;
		min-height: 0;
	}

	.back .sheet {
		height: 100%;
		font-size: 5px;
		line-height: 6px;
	}

	.back .sheet thead th {
		height: 9px;
	}

	.back .sheet td {
		height: 7px;
		text-align: center;
		line-height: 5px;
	}

	.back .sheet td.head {
		font-size: 6px;
		font-weight: 700;
	}

	.back .sheet td.inkb {
		border-bottom-color: #777;
	}

	.back .sheet td.inkr {
		border-right-color: #777;
	}

	.back .sheet td.shade {
		background: #d9d9d9;
	}

	.inner {
		width: 10px;
		padding: 1px 2px;
		background: #e6e6e6;
	}

	.inner button {
		height: 6px;
	}

	.inner .knob {
		flex: 1;
	}

	.hscroll {
		flex: none;
		display: flex;
		align-items: center;
		gap: 3px;
		height: 9px;
		padding: 0 9px 0 77px;
		background: #e6e6e6;
	}

	.hscroll i {
		width: 210px;
		height: 5px;
		background: #fff;
	}

	.hscroll span:last-child {
		margin-left: auto;
	}

	.xlstatus {
		flex: none;
		display: flex;
		align-items: center;
		justify-content: flex-end;
		gap: 8px;
		height: 9px;
		padding-right: 3px;
	}

	.xlstatus span {
		display: flex;
	}

	.xlstatus .sel {
		padding: 2px 4px;
		background: #ccc;
	}

	.xlstatus i {
		width: 34px;
		height: 5px;
		background:
			linear-gradient(#555, #555) center / 2px 5px no-repeat,
			linear-gradient(#999, #999) center / 100% 1px no-repeat;
	}

	.strip {
		flex: none;
		height: 3px;
		background: linear-gradient(90deg, #111 45%, #3a1c14 65%, #1c1210);
	}

	.ime {
		position: absolute;
		right: 121px;
		bottom: 4px;
		display: flex;
		align-items: center;
		justify-content: center;
		gap: 2px;
		width: 53px;
		height: 20px;
		border: 2px solid #ddd;
		outline: 1px solid #777;
		outline-offset: -1px;
		border-radius: 10px;
		background: linear-gradient(#777, #111);
		color: #fff;
		font-size: 10px;
	}

	.ime i {
		width: 3px;
		height: 3px;
		border-radius: 50%;
		background: #25c5bd;
	}

	/* status bar */
	.status {
		flex: none;
		display: flex;
		align-items: center;
		height: 12px;
		padding: 0 4px;
		gap: 8px;
		border-top: 1px solid #d4d4d4;
		background: #f3f3f3;
	}

	.status > span:nth-child(2) {
		margin: 0 0 0 4px;
	}

	.views {
		display: flex;
	}

	.views button {
		width: 21px;
		height: 11px;
	}

	.views .on {
		background: #d2d2d2;
	}

	.status input {
		width: 58px;
		height: 9px;
		margin: 0 -6px;
		background: linear-gradient(#888, #888) center / 100% 1px no-repeat;
	}

	.status input::-webkit-slider-thumb {
		appearance: none;
		width: 3px;
		height: 7px;
		background: #444;
	}
</style>
